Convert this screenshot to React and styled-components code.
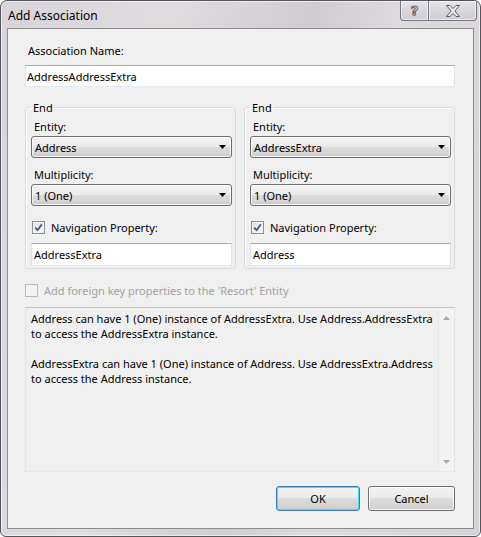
import React from 'react';
import styled, { createGlobalStyle } from 'styled-components';

const GlobalStyle = createGlobalStyle`
  html, body {
    margin: 0;
    padding: 0;
    background: #ffffff;
  }
  body {
    font-family: 'Noto Sans', 'Open Sans', sans-serif;
    font-size: 11px;
    color: #000000;
  }
  * {
    box-sizing: border-box;
  }
`;

const description = [
  'Address can have 1 (One) instance of AddressExtra. Use Address.AddressExtra',
  'to access the AddressExtra instance.',
  '',
  'AddressExtra can have 1 (One) instance of Address. Use AddressExtra.Address',
  'to access the Address instance.',
];

const CloseGlyph = () => (
  <svg width="14" height="12" viewBox="0 0 14 12">
    <polygon
      points="0.5,0.5 4,0.5 7,3.6 10,0.5 13.5,0.5 8.9,6 13.5,11.5 10,11.5 7,8.4 4,11.5 0.5,11.5 5.1,6"
      fill="#ececec"
      stroke="#5c5c64"
      strokeWidth="1"
      strokeLinejoin="round"
    />
  </svg>
);

const DropArrow = () => (
  <svg width="7" height="4" viewBox="0 0 7 4">
    <polygon points="0,0 7,0 3.5,4" fill="#000000" />
  </svg>
);

const ScrollArrow = ({ up }) => (
  <svg width="7" height="4" viewBox="0 0 7 4">
    <polygon points={up ? '0,4 7,4 3.5,0' : '0,0 7,0 3.5,4'} fill="#a8a8a8" />
  </svg>
);

const CheckMark = () => (
  <svg width="9" height="9" viewBox="0 0 9 9">
    <path d="M1.2 4.6 L3.6 7.2 L7.8 1.4" fill="none" stroke="#46598c" strokeWidth="1.8" />
  </svg>
);

const Combo = ({ value }) => (
  <ComboBox>
    <ComboText>{value}</ComboText>
    <DropArrow />
  </ComboBox>
);

const EndGroup = ({ entity, multiplicity, navigation }) => (
  <GroupBox>
    <Legend>End</Legend>
    <FieldLabel>Entity:</FieldLabel>
    <Combo value={entity} />
    <FieldLabel $top={9}>Multiplicity:</FieldLabel>
    <Combo value={multiplicity} />
    <CheckRow $top={14}>
      <CheckBox>
        <CheckMark />
      </CheckBox>
      Navigation Property:
    </CheckRow>
    <TextBox $top={8} $height={23} $pad={2}>{navigation}</TextBox>
  </GroupBox>
);

const App = () => {
  return (
    <>
      <GlobalStyle />
      <Window>
        <TitleBar>
          <Title>Add Association</Title>
          <Caption>
            <CaptionButton $width={29} $first>
              <HelpGlyph>?</HelpGlyph>
            </CaptionButton>
            <CaptionButton $width={48}>
              <CloseGlyph />
            </CaptionButton>
          </Caption>
        </TitleBar>
        <Client>
          <FieldLabel>Association Name:</FieldLabel>
          <TextBox $top={5} $height={22} $pad={1}>AddressAddressExtra</TextBox>
          <Groups>
            <EndGroup entity="Address" multiplicity="1 (One)" navigation="AddressExtra" />
            <EndGroup entity="AddressExtra" multiplicity="1 (One)" navigation="Address" />
          </Groups>
          <ForeignRow>
            <DisabledBox />
            Add foreign key properties to the 'Resort' Entity
          </ForeignRow>
          <Description>
            <DescriptionText>
              {description.map((line, i) => (
                <Line key={i}>{line || '\u00a0'}</Line>
              ))}
            </DescriptionText>
            <ScrollBar>
              <ScrollArrow up />
              <ScrollArrow />
            </ScrollBar>
          </Description>
          <ButtonRow>
            <Button $width={84} $default>OK</Button>
            <Button $width={87}>Cancel</Button>
          </ButtonRow>
        </Client>
      </Window>
    </>
  );
};

export default App;

const Window = styled.div`
  width: 481px;
  height: 537px;
  display: flex;
  flex-direction: column;
  border: 1px solid #55555d;
  border-radius: 7px 7px 6px 6px;
  padding: 0 6px 7px 6px;
  background: linear-gradient(
    100deg,
    #d8d4da 0%,
    #e0dce0 30%,
    #cfcbd1 55%,
    #dedae0 70%,
    #d6d2d8 100%
  );
  box-shadow: inset 0 0 0 1px rgba(255, 255, 255, 0.6);
`;

const TitleBar = styled.div`
  height: 27px;
  display: flex;
  align-items: flex-start;
`;

const Title = styled.div`
  padding: 7px 0 0 1px;
  font-size: 12px;
  line-height: 15px;
  color: #000000;
`;

const Caption = styled.div`
  margin-left: auto;
  margin-right: -3px;
  display: flex;
`;

const CaptionButton = styled.div`
  width: ${(p) => p.$width}px;
  height: 20px;
  display: flex;
  align-items: center;
  justify-content: center;
  border: 1px solid #77777f;
  border-top: none;
  border-left: ${(p) => (p.$first ? '1px solid #77777f' : 'none')};
  border-radius: ${(p) => (p.$first ? '0 0 0 4px' : '0 0 4px 0')};
  background: linear-gradient(#e6e3e8, #d9d6dc 50%, #cfccd3);
  box-shadow: inset 0 0 0 1px rgba(255, 255, 255, 0.55);
`;

const HelpGlyph = styled.span`
  font-family: 'DejaVu Sans', sans-serif;
  font-size: 13px;
  font-weight: bold;
  line-height: 13px;
  color: #ececec;
  -webkit-text-stroke: 1px #5c5c64;
`;

const Client = styled.div`
  flex: 1;
  display: flex;
  flex-direction: column;
  border: 1px solid #8c8c8c;
  background: #f0f0f0;
  padding: 14px 18px 16px 17px;
`;

const FieldLabel = styled.div`
  margin-top: ${(p) => p.$top || 0}px;
  margin-bottom: 2px;
  padding-left: 3px;
  line-height: 15px;
  white-space: nowrap;
`;

const TextBox = styled.div`
  margin-top: ${(p) => p.$top || 0}px;
  height: ${(p) => p.$height}px;
  display: flex;
  align-items: center;
  padding: 0 ${(p) => p.$pad}px;
  background: #ffffff;
  border: 1px solid;
  border-color: #abadb3 #e2e3ea #e3e9ef #e2e3ea;
  white-space: nowrap;
`;

const Groups = styled.div`
  margin-top: 13px;
  display: grid;
  grid-template-columns: 1fr 1fr;
  gap: 8px;
`;

const GroupBox = styled.fieldset`
  margin: 0;
  min-width: 0;
  padding: 4px 3px 2px 5px;
  border: 1px solid #d9dcde;
  border-radius: 3px;
  box-shadow: inset 1px 1px 0 #ffffff;
`;

const Legend = styled.legend`
  padding: 0 2px;
  line-height: 15px;
`;

const ComboBox = styled.div`
  height: 22px;
  display: flex;
  align-items: center;
  justify-content: space-between;
  padding: 0 5px 0 3px;
  border: 1px solid #707070;
  border-radius: 3px;
  background: linear-gradient(#f2f2f2 0%, #ebebeb 50%, #dddddd 50%, #cfcfcf 100%);
  box-shadow: inset 0 0 0 1px rgba(255, 255, 255, 0.7);
`;

const ComboText = styled.span`
  white-space: nowrap;
`;

const CheckRow = styled.div`
  margin-top: ${(p) => p.$top || 0}px;
  height: 15px;
  display: flex;
  align-items: center;
  gap: 6px;
  padding-left: 1px;
  white-space: nowrap;
`;

const CheckBox = styled.div`
  width: 13px;
  height: 13px;
  display: flex;
  align-items: center;
  justify-content: center;
  border: 1px solid #8e8f8f;
  background: linear-gradient(135deg, #dcdcdc, #ffffff);
  box-shadow: inset 0 0 0 1px #f4f4f4;
`;

const DisabledBox = styled.div`
  width: 13px;
  height: 13px;
  border: 1px solid #bcbcbc;
  background: #f4f4f4;
`;

const ForeignRow = styled.div`
  margin-top: 14px;
  height: 15px;
  display: flex;
  align-items: center;
  gap: 6px;
  color: #a3a3a3;
  white-space: nowrap;
`;

const Description = styled.div`
  margin-top: 9px;
  height: 165px;
  display: flex;
  border: 1px solid;
  border-color: #c3c5ca #e2e3ea #e3e9ef #e2e3ea;
  background: #f0f0f0;
`;

const DescriptionText = styled.div`
  flex: 1;
  padding: 3px 5px;
  line-height: 15px;
`;

const Line = styled.div`
  white-space: nowrap;
`;

const ScrollBar = styled.div`
  width: 17px;
  display: flex;
  flex-direction: column;
  justify-content: space-between;
  align-items: center;
  padding: 8px 0 7px;
  border-left: 1px solid #e8e8e8;
  background: #f3f3f3;
`;

const ButtonRow = styled.div`
  margin-top: 14px;
  display: flex;
  justify-content: flex-end;
  gap: 8px;
`;

const Button = styled.div`
  width: ${(p) => p.$width}px;
  height: 25px;
  display: flex;
  align-items: center;
  justify-content: center;
  border: 1px solid ${(p) => (p.$default ? '#3c7fb1' : '#707070')};
  border-radius: 3px;
  background: linear-gradient(#f2f2f2 0%, #ebebeb 50%, #dddddd 50%, #cfcfcf 100%);
  box-shadow: inset 0 0 0 1px ${(p) => (p.$default ? '#48d8fb' : 'rgba(255, 255, 255, 0.8)')};
`;
